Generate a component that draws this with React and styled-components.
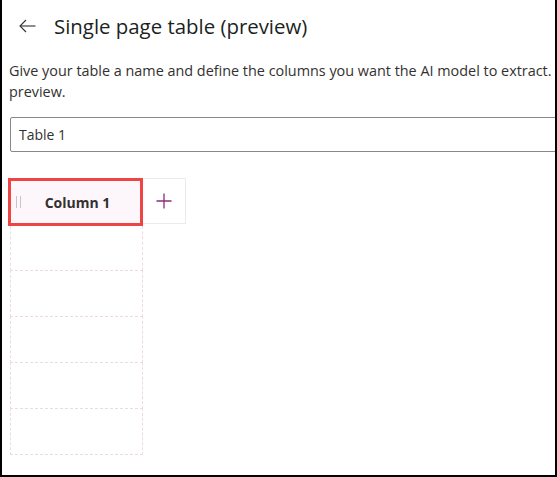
import React from 'react';
import styled, { createGlobalStyle } from 'styled-components';

const GlobalStyle = createGlobalStyle`
  html, body {
    margin: 0;
    padding: 0;
    background: #ffffff;
  }
  body {
    font-family: "Open Sans", "Noto Sans", sans-serif;
    color: #323130;
  }
`;

const Frame = styled.div`
  width: 557px;
  height: 477px;
  box-sizing: border-box;
  border: 2px solid #000000;
  border-top: none;
  overflow: hidden;
  background: #ffffff;
`;

const Content = styled.div`
  width: 720px;
  padding: 0 0 0 7px;
`;

const Header = styled.header`
  display: flex;
  align-items: center;
  gap: 17px;
  height: 52px;
  padding-left: 8px;
`;

const BackButton = styled.button`
  display: flex;
  align-items: center;
  justify-content: center;
  width: 20px;
  height: 20px;
  padding: 0;
  border: none;
  background: transparent;
  color: #323130;
`;

const Title = styled.h1`
  margin: 0;
  font-size: 20.4px;
  font-weight: 400;
  color: #201f1e;
`;

const Description = styled.p`
  margin: 8px 0 0;
  font-size: 14.4px;
  line-height: 21px;
  white-space: nowrap;
`;

const NameInput = styled.div`
  display: flex;
  align-items: center;
  margin: 15px 0 0 1px;
  height: 35px;
  box-sizing: border-box;
  border: 1px solid #8a8886;
  border-radius: 2px;
  padding-left: 8px;
  font-size: 14px;
  color: #323130;
`;

const Grid = styled.div`
  display: flex;
  align-items: flex-start;
  margin-top: 26px;
  padding-left: 1px;
`;

const ColumnStack = styled.div`
  display: flex;
  flex-direction: column;
`;

const HeaderCell = styled.div`
  position: relative;
  display: flex;
  align-items: center;
  justify-content: center;
  width: 135px;
  height: 48px;
  margin-left: -2px;
  padding-left: 4px;
  box-sizing: border-box;
  border: 3px solid #ef4444;
  background: #fdf7fc;
  font-size: 14px;
  font-weight: 700;
  color: #323130;
`;

const Grip = styled.span`
  position: absolute;
  left: 5px;
  top: 15px;
  width: 3px;
  height: 12px;
  border-left: 1px solid #c8c6c4;
  border-right: 1px solid #c8c6c4;
`;

const BodyCell = styled.div`
  width: 133px;
  height: ${p => (p.$first ? 45 : 47)}px;
  box-sizing: border-box;
  border: 1px dashed #ecdbe3;
  border-top: ${p => (p.$first ? 'none' : '1px dashed #ecdbe3')};
  margin-top: ${p => (p.$first ? 0 : -1)}px;
`;

const AddButton = styled.button`
  display: flex;
  align-items: center;
  justify-content: center;
  width: 43px;
  height: 46px;
  padding: 0;
  box-sizing: border-box;
  border: 1px solid #edebe9;
  border-left: none;
  background: #ffffff;
`;

const rows = [0, 1, 2, 3, 4];

export default function App() {
  return (
    <>
      <GlobalStyle />
      <Frame>
        <Content>
          <Header>
            <BackButton aria-label="Back">
              <svg width="17" height="14" viewBox="0 0 17 14" fill="none" stroke="#323130" strokeWidth="1.1">
                <path d="M16.5 7H1" />
                <path d="M7 1L1 7l6 6" />
              </svg>
            </BackButton>
            <Title>Single page table (preview)</Title>
          </Header>
          <Description>
            Give your table a name and define the columns you want the AI model to extract.
            <br />
            preview.
          </Description>
          <NameInput>Table 1</NameInput>
          <Grid>
            <ColumnStack>
              <HeaderCell>
                <Grip />
                Column 1
              </HeaderCell>
              {rows.map(r => (
                <BodyCell key={r} $first={r === 0} />
              ))}
            </ColumnStack>
            <AddButton aria-label="Add column">
              <svg width="16" height="16" viewBox="0 0 16 16" stroke="#8a2c7e" strokeWidth="1.3">
                <path d="M8 0.5v15M0.5 8h15" />
              </svg>
            </AddButton>
          </Grid>
        </Content>
      </Frame>
    </>
  );
}
